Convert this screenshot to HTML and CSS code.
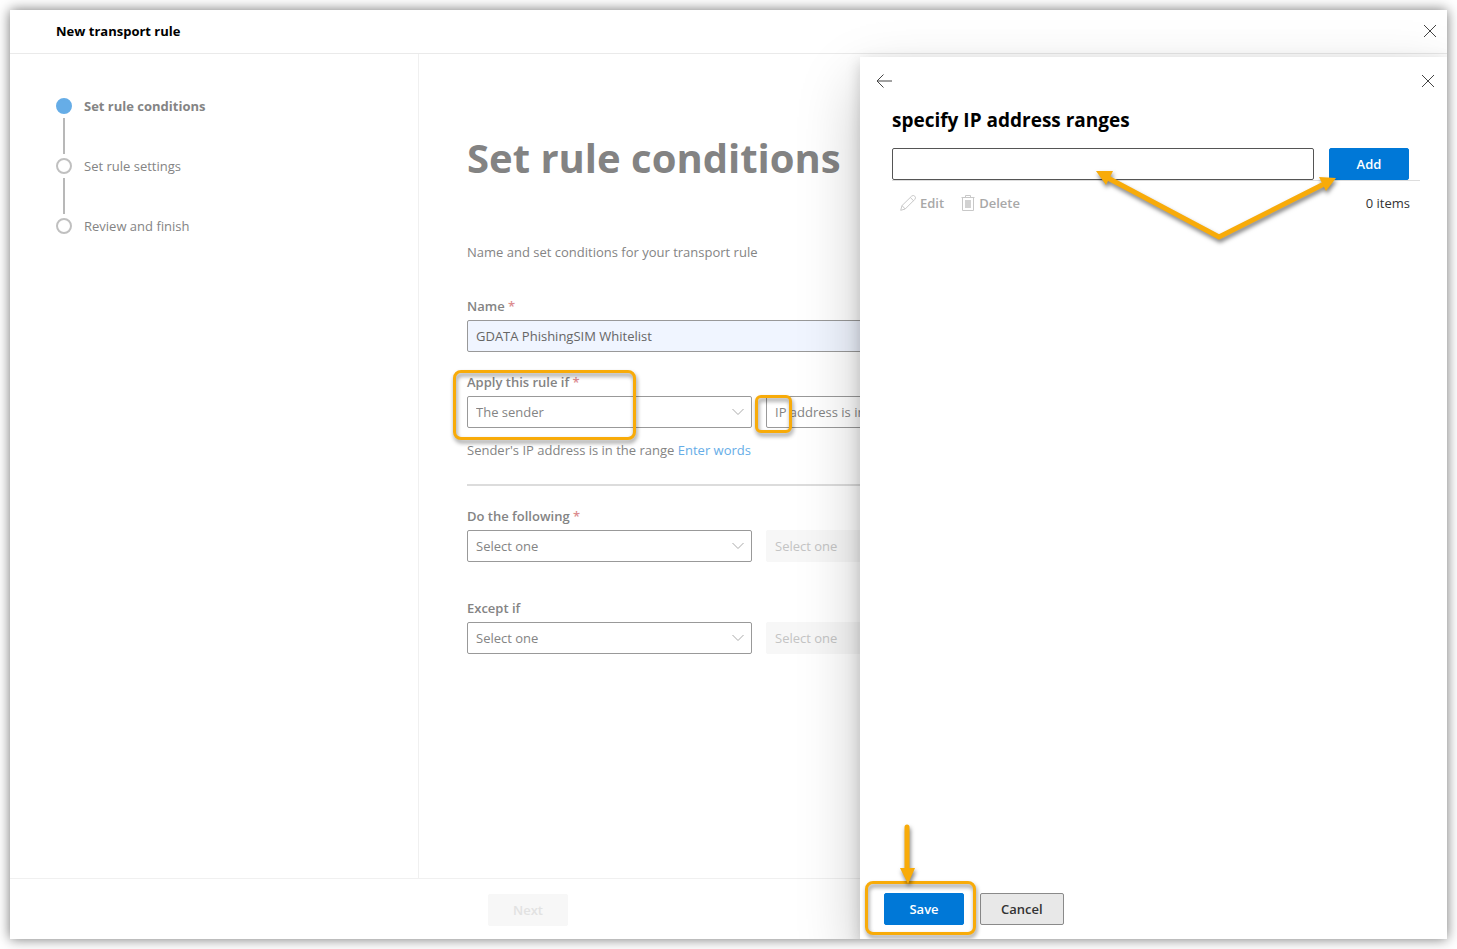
FILE: index.html
```html
<!DOCTYPE html>
<html lang="en">

<head>
    <meta charset="UTF-8">
    <meta name="viewport" content="width=device-width, initial-scale=1.0">
    <title>New transport rule</title>
    <link rel="stylesheet" href="styles.css">
</head>

<body>
    <div class="window">
        <header class="titlebar">
            <h2>New transport rule</h2>
            <button class="icon-btn" type="button" aria-label="Close">
                <svg width="14" height="14" viewBox="0 0 14 14"><path d="M1 1l12 12M13 1L1 13"/></svg>
            </button>
        </header>

        <div class="content">
            <nav class="sidebar">
                <ol class="steps">
                    <li class="current">Set rule conditions</li>
                    <li>Set rule settings</li>
                    <li>Review and finish</li>
                </ol>
            </nav>

            <main>
                <h1>Set rule conditions</h1>
                <p class="intro">Name and set conditions for your transport rule</p>

                <div class="field">
                    <label for="name">Name <span class="req">*</span></label>
                    <input id="name" class="filled" type="text" value="GDATA PhishingSIM Whitelist">
                </div>

                <div class="field">
                    <label for="apply">Apply this rule if <span class="req">*</span></label>
                    <div class="row">
                        <div class="select">
                            <select id="apply">
                                <option>The sender</option>
                            </select>
                            <svg width="12" height="8" viewBox="0 0 12 8"><path d="M.5 1L6 6.500L11.500 1"/></svg>
                        </div>
                        <div class="select wide">
                            <select aria-label="Sender condition">
                                <option>IP address is in any of these ranges or exactly matches</option>
                            </select>
                            <span class="mark mark-ip"></span>
                        </div>
                    </div>
                    <span class="mark mark-sender"></span>
                </div>
                <p class="hint">Sender's IP address is in the range <a href="#">Enter words</a></p>
                <hr>

                <div class="field">
                    <label for="action">Do the following <span class="req">*</span></label>
                    <div class="row">
                        <div class="select">
                            <select id="action">
                                <option>Select one</option>
                            </select>
                            <svg width="12" height="8" viewBox="0 0 12 8"><path d="M.5 1L6 6.500L11.500 1"/></svg>
                        </div>
                        <div class="select wide">
                            <select aria-label="Action detail" disabled>
                                <option>Select one</option>
                            </select>
                        </div>
                    </div>
                </div>

                <div class="field except">
                    <label for="except">Except if</label>
                    <div class="row">
                        <div class="select">
                            <select id="except">
                                <option>Select one</option>
                            </select>
                            <svg width="12" height="8" viewBox="0 0 12 8"><path d="M.5 1L6 6.500L11.500 1"/></svg>
                        </div>
                        <div class="select wide">
                            <select aria-label="Exception detail" disabled>
                                <option>Select one</option>
                            </select>
                        </div>
                    </div>
                </div>
            </main>
        </div>

        <footer class="bottombar">
            <button class="btn" type="button" disabled>Next</button>
        </footer>

        <aside class="panel">
            <div class="panel-nav">
                <button class="icon-btn" type="button" aria-label="Back">
                    <svg width="16" height="14" viewBox="0 0 16 14"><path d="M16 7H1M7.500 .5L1 7l6.500 6.500"/></svg>
                </button>
                <button class="icon-btn" type="button" aria-label="Close panel">
                    <svg width="14" height="14" viewBox="0 0 14 14"><path d="M1 1l12 12M13 1L1 13"/></svg>
                </button>
            </div>
            <div class="panel-body">
                <h3>specify IP address ranges</h3>
                <form class="add-row">
                    <input type="text" aria-label="IP address range">
                    <button class="btn primary" type="button">Add</button>
                </form>
                <div class="toolbar">
                    <button type="button" disabled>
                        <svg width="16" height="16" viewBox="0 0 16 16"><path d="M.7 15.300L2 10.600L11.600 1.200a2.200 2.200 0 0 1 3.200 3.200L5.200 14zM2 10.600L5.200 14M10.300 2.500l3.200 3.200"/></svg>
                        Edit
                    </button>
                    <button type="button" disabled>
                        <svg width="14" height="16" viewBox="0 0 14 16"><path d="M.5 2.500h13M4.500 2.500v-2h5v2M1.500 2.500v13h11v-13"/><path class="bin" d="M4 5h6v8H4z"/></svg>
                        Delete
                    </button>
                    <span class="count">0 items</span>
                </div>
                <!-- pointer to the text box and the Add button -->
                <svg class="arrow arrow-add" width="260" height="90" viewBox="0 0 260 90">
                    <path class="shaft" d="M20 16L133 76L236 24"/>
                    <path class="head" d="M10 10h17l-7 14zM250 17l-17 -1l7 14z"/>
                </svg>
            </div>
            <div class="panel-actions">
                <button class="btn primary" type="button">Save</button>
                <button class="btn" type="button">Cancel</button>
                <span class="mark mark-save"></span>
                <svg class="arrow arrow-save" width="30" height="70" viewBox="0 0 30 70">
                    <path class="shaft" d="M15 7V52"/>
                    <path class="head" d="M8 48h15l-7 16z"/>
                </svg>
            </div>
        </aside>
    </div>
</body>

</html>
```

FILE: styles.css
```css
* {
    box-sizing: border-box;
}

body {
    margin: 0;
    padding: 10px;
    height: 100vh;
    background: #fff;
    font: 13px/20px "Open Sans", "Noto Sans", sans-serif;
    color: #848484;
}

h1, h2, h3, p, ol {
    margin: 0;
    padding: 0;
}

.window {
    position: relative;
    display: flex;
    flex-direction: column;
    height: 100%;
    min-height: 700px;
    overflow: hidden;
    background: #fff;
    box-shadow: 0 0 12px rgba(0, 0, 0, .55);
}

.titlebar {
    display: flex;
    justify-content: space-between;
    align-items: center;
    height: 44px;
    padding: 0 10px 2px 46px;
    border-bottom: 1px solid #eaeaea;
}

h2 {
    font-size: 13px;
    font-weight: 700;
    color: #000;
}

button, input, select {
    font: inherit;
    color: inherit;
}

.icon-btn {
    display: flex;
    padding: 0;
    border: 0;
    background: none;
}

svg {
    fill: none;
    stroke: #444;
}

.content {
    flex: 1;
    display: flex;
}

.sidebar {
    width: 409px;
    padding: 42px 46px;
    border-right: 1px solid #f0f0f0;
}

.steps {
    list-style: none;
}

.steps li {
    position: relative;
    height: 60px;
    padding-left: 28px;
}

.steps li::before {
    content: "";
    position: absolute;
    left: 0;
    top: 2px;
    width: 12px;
    height: 12px;
    border: 2px solid #c0c0c0;
    border-radius: 50%;
}

.steps li:not(:last-child)::after {
    content: "";
    position: absolute;
    left: 7px;
    top: 22px;
    width: 2px;
    height: 36px;
    background: #b8b8b8;
}

.steps .current {
    font-weight: 700;
}

.steps .current::before {
    border-color: #66ade7;
    background: #66ade7;
}

main {
    flex: 1;
    padding: 76px 48px 0;
}

h1 {
    font-size: 40px;
    line-height: 56px;
    font-weight: 700;
    color: #838383;
}

.intro {
    margin: 56px 0 34px;
}

.field {
    position: relative;
    margin-bottom: 20px;
}

.field label {
    display: block;
    margin-bottom: 4px;
    font-weight: 600;
}

.req {
    color: #dc8c8f;
}

input, select {
    display: block;
    width: 100%;
    height: 32px;
    padding: 0 8px;
    border: 1px solid #999;
    border-radius: 2px;
    background: #fff;
    appearance: none;
}

.filled {
    background: #f0f5ff;
    color: #666;
}

.row {
    display: flex;
    gap: 14px;
}

.select {
    position: relative;
    width: 285px;
}

.select.wide {
    flex: 1;
}

.select svg {
    position: absolute;
    right: 8px;
    top: 12px;
    stroke: #aaa;
}

select:disabled {
    border-color: #f7f7f7;
    background: #f7f7f7;
    color: #c4c4c4;
    opacity: 1;
}

.hint {
    margin-top: -8px;
}

a {
    color: #66ade7;
    text-decoration: none;
}

hr {
    height: 2px;
    margin: 24px 0 20px;
    border: 0;
    background: #dcdcdc;
}

.except {
    margin-top: 36px;
}

.bottombar {
    height: 61px;
    padding: 15px 0 0 478px;
    border-top: 1px solid #f0f0f0;
}

.btn {
    min-width: 80px;
    height: 32px;
    padding: 0 20px;
    border: 1px solid #8a8a8a;
    border-radius: 2px;
    background: #e8e8e8;
    color: #333;
    font-weight: 600;
}

.btn:disabled {
    border-color: #f7f7f7;
    background: #f7f7f7;
    color: #e2e2e2;
}

.btn.primary {
    border-color: #0078d7;
    background: #0078d7;
    color: #fff;
}

.panel {
    position: absolute;
    top: 47px;
    right: 0;
    bottom: 0;
    z-index: 2;
    display: flex;
    flex-direction: column;
    width: 587px;
    background: #fff;
    box-shadow: 0 26px 58px rgba(0, 0, 0, .22), 0 5px 14px rgba(0, 0, 0, .18);
}

.panel-nav {
    display: flex;
    justify-content: space-between;
    align-items: center;
    height: 48px;
    padding: 0 12px 0 16px;
}

.panel-body {
    position: relative;
    flex: 1;
    padding: 0 27px 0 32px;
}

h3 {
    font-size: 19px;
    line-height: 30px;
    font-weight: 700;
    color: #000;
}

.add-row {
    display: flex;
    gap: 15px;
    margin-top: 13px;
    padding-right: 11px;
    border-bottom: 1px solid #ddd;
}

.add-row input {
    flex: 1;
    border-color: #555;
    color: #333;
}

.toolbar {
    display: flex;
    gap: 17px;
    align-items: center;
    height: 44px;
    padding: 0 10px 0 8px;
}

.toolbar button {
    display: flex;
    gap: 4px;
    align-items: center;
    padding: 0;
    border: 0;
    background: none;
    color: #a8a8a8;
    font-weight: 600;
}

.toolbar svg {
    stroke: #c8c8c8;
}

.toolbar .bin {
    fill: #d2d2d2;
    stroke: none;
}

.count {
    margin-left: auto;
    color: #333;
}

.panel-actions {
    position: relative;
    display: flex;
    gap: 16px;
    padding: 0 24px 14px;
}

/* callouts drawn over the form */
.mark {
    position: absolute;
    border: 3px solid #f8ab09;
    border-radius: 8px;
    pointer-events: none;
    filter: drop-shadow(1px 3px 2px rgba(0, 0, 0, .45));
}

.mark-sender {
    left: -14px;
    top: -2px;
    width: 183px;
    height: 70px;
}

.mark-ip {
    left: -11px;
    top: -1px;
    width: 37px;
    height: 38px;
    border-radius: 6px;
}

.mark-save {
    left: 5px;
    top: -12px;
    width: 111px;
    height: 54px;
}

.arrow {
    position: absolute;
    pointer-events: none;
    filter: drop-shadow(1px 3px 2px rgba(0, 0, 0, .5));
}

.shaft {
    stroke: #f8ab09;
    stroke-width: 5;
    stroke-linecap: round;
}

.head {
    fill: #f8ab09;
    stroke: none;
}

.arrow-add {
    left: 226px;
    top: 56px;
}

.arrow-save {
    left: 32px;
    top: -73px;
}
```
